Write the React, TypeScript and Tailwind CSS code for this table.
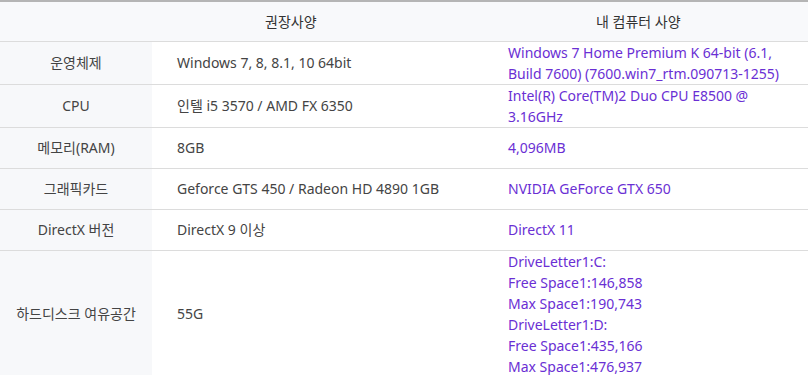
import React from "react";

type Row = { label: string; required: string; mine: string[] };

const rows: Row[] = [
  {
    label: "운영체제",
    required: "Windows 7, 8, 8.1, 10 64bit",
    mine: ["Windows 7 Home Premium K 64-bit (6.1,", "Build 7600) (7600.win7_rtm.090713-1255)"],
  },
  {
    label: "CPU",
    required: "인텔 i5 3570 / AMD FX 6350",
    mine: ["Intel(R) Core(TM)2 Duo CPU E8500 @", "3.16GHz"],
  },
  { label: "메모리(RAM)", required: "8GB", mine: ["4,096MB"] },
  {
    label: "그래픽카드",
    required: "Geforce GTS 450 / Radeon HD 4890 1GB",
    mine: ["NVIDIA GeForce GTX 650"],
  },
  { label: "DirectX 버전", required: "DirectX 9 이상", mine: ["DirectX 11"] },
  {
    label: "하드디스크 여유공간",
    required: "55G",
    mine: [
      "DriveLetter1:C:",
      "Free Space1:146,858",
      "Max Space1:190,743",
      "DriveLetter1:D:",
      "Free Space1:435,166",
      "Max Space1:476,937",
    ],
  },
];

export default function App() {
  return (
    <div className="w-[808px] h-[375px] overflow-hidden bg-white font-['Noto_Sans','Noto_Sans_CJK_KR',sans-serif] text-[14px]">
      <table className="w-full border-collapse table-fixed">
        <colgroup>
          <col className="w-[152px]" />
          <col className="w-[331px]" />
          <col />
        </colgroup>
        <thead>
          <tr className="bg-[#f8f9fb] border-t-2 border-t-[#b5b5b5] border-b border-b-[#dcdcdc]">
            <th className="h-[40px] p-0"></th>
            <th className="h-[40px] p-0 pl-[113px] text-left font-normal text-[#333]">권장사양</th>
            <th className="h-[40px] p-0 pl-[113px] text-left font-normal text-[#333]">내 컴퓨터 사양</th>
          </tr>
        </thead>
        <tbody>
          {rows.map((r) => (
            <tr key={r.label} className="border-b border-b-[#dcdcdc]">
              <td className="h-[41px] p-0 bg-[#f7f8fa] text-center text-[#444] leading-[21px] align-middle">
                {r.label}
              </td>
              <td className="h-[41px] p-0 pl-[25px] text-[#444] leading-[21px] align-middle">{r.required}</td>
              <td className="h-[41px] p-0 pl-[25px] text-[#6a2fd4] leading-[21px] align-middle">
                {r.mine.map((line, i) => (
                  <div key={i}>{line}</div>
                ))}
              </td>
            </tr>
          ))}
        </tbody>
      </table>
    </div>
  );
}
